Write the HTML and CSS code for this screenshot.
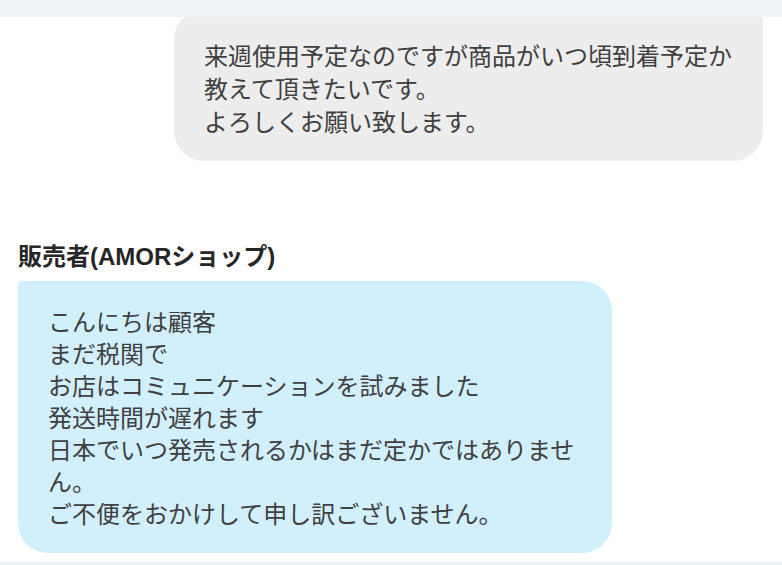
FILE: index.html
```html
<!DOCTYPE html>
<html lang="ja">
<head>
    <meta charset="UTF-8">
    <meta name="viewport" content="width=device-width, initial-scale=1.0">
    <title>メッセージ</title>
    <link rel="stylesheet" href="styles.css">
</head>
<body>
    <div class="topbar"></div>

    <div class="thread">
        <div class="msg msg-sent">
            <div class="bubble bubble-sent">
                来週使用予定なのですが商品がいつ頃到着予定か教えて頂きたいです。<br>
                よろしくお願い致します。
            </div>
        </div>

        <div class="msg msg-received">
            <div class="sender">販売者(AMORショップ)</div>
            <div class="bubble bubble-received">
                こんにちは顧客<br>
                まだ税関で<br>
                お店はコミュニケーションを試みました<br>
                発送時間が遅れます<br>
                日本でいつ発売されるかはまだ定かではありません。<br>
                ご不便をおかけして申し訳ございません。
            </div>
        </div>
    </div>

    <div class="bottombar"></div>
</body>
</html>
```

FILE: styles.css
```css
body {
    font-family: "Noto Sans CJK JP", sans-serif;
    background-color: #fff;
    color: #404040;
    margin: 0;
    padding: 0;
    height: 565px;
    overflow: hidden;
    display: flex;
    flex-direction: column;
}

.topbar {
    height: 17px;
    background-color: #eef3f6;
    position: relative;
    z-index: 1;
}

.thread {
    padding: 0 19px 0 18px;
    display: flex;
    flex-direction: column;
}

.msg {
    display: flex;
    flex-direction: column;
}

.msg-sent {
    align-items: flex-end;
    margin-top: -6px;
}

.msg-received {
    align-items: flex-start;
    margin-top: 84px;
}

.bubble {
    font-size: 24px;
    box-sizing: border-box;
}

.bubble-sent {
    width: 589px;
    padding: 27px 19px 24px 30px;
    line-height: 33px;
    background-color: #ededed;
    border-radius: 28px 4px 30px 30px;
}

.sender {
    font-family: "Liberation Sans", "Noto Sans CJK JP", sans-serif;
    font-weight: bold;
    font-size: 24px;
    line-height: 24px;
    color: #262626;
    margin-bottom: 12px;
}

.bubble-received {
    width: 594px;
    padding: 24px 24px 24px 30px;
    line-height: 32px;
    background-color: #d2f0fc;
    border-radius: 4px 30px 30px 30px;
}

.bottombar {
    margin-top: 9px;
    flex: 1;
    background-color: #eaf5f8;
}
```
